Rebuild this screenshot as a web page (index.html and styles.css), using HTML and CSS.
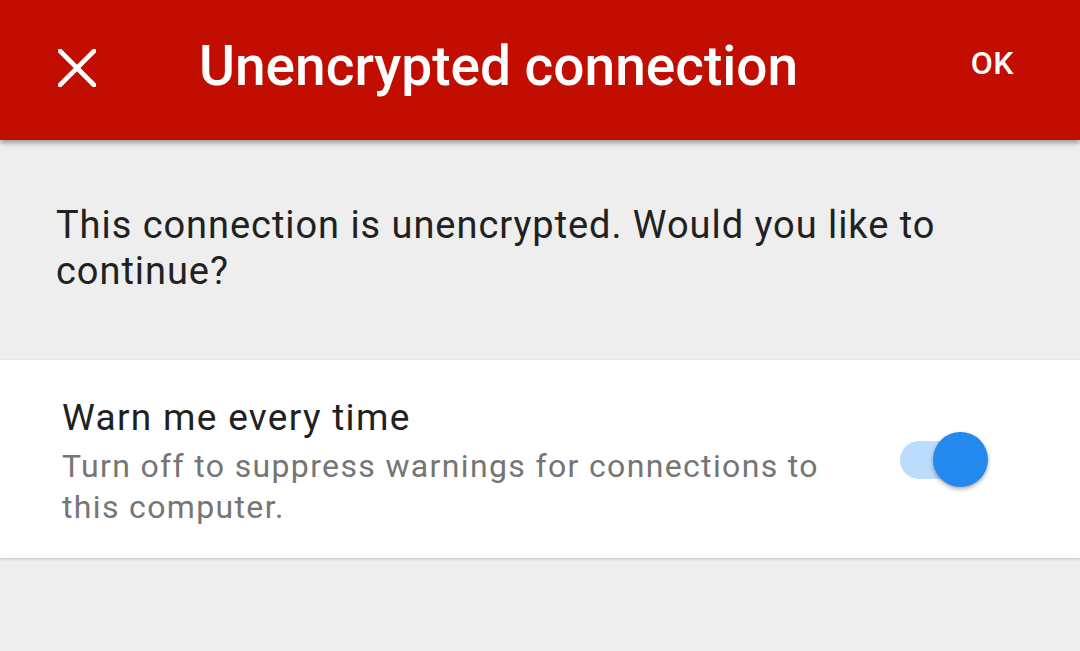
FILE: index.html
```html
<!DOCTYPE html>
<html lang="en">
<head>
    <meta charset="utf-8">
    <title>Unencrypted connection</title>
    <link rel="stylesheet" href="styles.css">
</head>
<body>
<header class="toolbar">
    <button class="close" aria-label="Close">
        <svg width="38" height="38" viewBox="0 0 38 38">
            <path d="M2 2 L36 36 M36 2 L2 36" stroke="#fff" stroke-width="4.6" stroke-linecap="square"/>
        </svg>
    </button>
    <h1 class="title">Unencrypted connection</h1>
    <button class="ok">OK</button>
</header>

<main>
    <p class="message">This connection is unencrypted. Would you like to continue?</p>

    <section class="card">
        <div class="card-text">
            <div class="card-title">Warn me every time</div>
            <div class="card-sub">Turn off to suppress warnings for connections to this computer.</div>
        </div>
        <div class="switch">
            <div class="track"></div>
            <div class="thumb"></div>
        </div>
    </section>
</main>
</body>
</html>
```

FILE: styles.css
```css
body {
    margin: 0;
    padding: 0;
    font-family: 'Roboto', sans-serif;
    background-color: #eeeeee;
    height: 651px;
    overflow: hidden;
}

.toolbar {
    height: 140px;
    background-color: #c20e00;
    display: flex;
    align-items: center;
    box-shadow: 0 3px 5px rgba(0, 0, 0, 0.35);
    position: relative;
    z-index: 1;
}

.toolbar button {
    background: none;
    border: none;
    padding: 0;
    color: #fff;
    font-family: inherit;
}

.close {
    margin-left: 58px;
    width: 38px;
    height: 38px;
    margin-top: -4px;
}

.close svg {
    display: block;
}

.title {
    margin: 0 0 0 103px;
    flex: 1;
    color: #fff;
    font-size: 55px;
    font-weight: 500;
    margin-top: -8px;
}

.ok {
    font-size: 32px;
    font-weight: 500;
    letter-spacing: 0.5px;
    margin-right: 66px;
    margin-top: -14px;
}

main {
    padding-top: 1px;
}

.message {
    margin: 61px 56px 0;
    font-size: 38px;
    letter-spacing: 0.95px;
    line-height: 46px;
    color: #212121;
}

.card {
    margin-top: 66px;
    height: 198px;
    background-color: #fff;
    box-shadow: 0 1px 3px rgba(0, 0, 0, 0.2);
    display: flex;
    align-items: center;
    box-sizing: border-box;
    padding: 0 92px 0 62px;
}

.card-text {
    flex: 1;
    max-width: 775px;
    padding-top: 6px;
}

.card-title {
    font-size: 37px;
    letter-spacing: 1.3px;
    color: #212121;
    line-height: 44px;
}

.card-sub {
    font-size: 32px;
    letter-spacing: 1.35px;
    line-height: 41px;
    color: #757575;
    margin-top: 6px;
}

.switch {
    position: relative;
    width: 88px;
    height: 56px;
    margin-left: auto;
    margin-top: 2px;
}

.track {
    position: absolute;
    left: 0;
    top: 9px;
    width: 62px;
    height: 38px;
    border-radius: 19px;
    background-color: #bcdcfc;
}

.thumb {
    position: absolute;
    left: 33px;
    top: 0;
    width: 55px;
    height: 55px;
    border-radius: 50%;
    background-color: #2489ee;
    box-shadow: 0 2px 4px rgba(0, 0, 0, 0.35);
}
```
